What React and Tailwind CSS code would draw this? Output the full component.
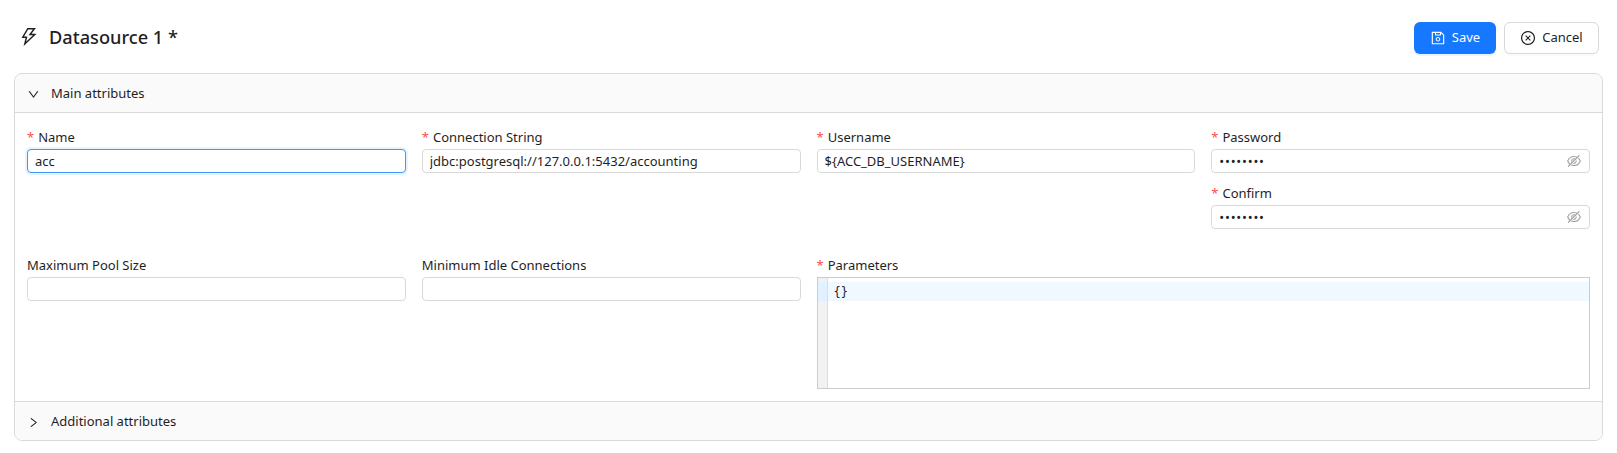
import React from "react";
import {
  AiOutlineCloseCircle,
  AiOutlineDown,
  AiOutlineEyeInvisible,
  AiOutlineRight,
  AiOutlineSave,
  AiOutlineThunderbolt,
} from "react-icons/ai";

const Label = ({ required, children }) => (
  <label className="flex h-[22px] items-center pb-[2px] text-[13px] leading-[20px] text-[#1f1f1f]">
    {required && <span className="mr-1 text-[#ff4d4f]">*</span>}
    {children}
  </label>
);

const Input = ({ value, focused }) => (
  <input
    readOnly
    value={value}
    className={
      "block h-6 w-full rounded-[4px] border bg-white px-[7px] text-[13px] text-[#1f1f1f] outline-none " +
      (focused
        ? "border-[#4096ff] shadow-[0_0_0_2px_rgba(5,145,255,0.1)]"
        : "border-[#d9d9d9]")
    }
  />
);

const Password = () => (
  <div className="flex h-6 w-full items-center rounded-[4px] border border-[#d9d9d9] bg-white px-[7px]">
    <input
      readOnly
      type="password"
      value="12345678"
      className="min-w-0 flex-1 bg-transparent pt-[2px] text-[13px] tracking-[0.8px] text-[#1f1f1f] outline-none"
    />
    <AiOutlineEyeInvisible className="text-[16px] text-[#a3a3a3]" />
  </div>
);

const Field = ({ label, required, value, focused }) => (
  <div>
    <Label required={required}>{label}</Label>
    <Input value={value} focused={focused} />
  </div>
);

const App = () => {
  return (
    <div className="h-[453px] bg-white px-[14px] font-['Noto_Sans','Open_Sans',sans-serif]">
      <div className="flex h-[73px] items-center justify-between pt-[2px]">
        <div className="flex items-center pl-[4px]">
          <AiOutlineThunderbolt className="text-[22px] text-[#1f1f1f]" />
          <h1 className="ml-[9px] text-[18.2px] font-medium text-[#1f1f1f]">Datasource 1 *</h1>
        </div>
        <div className="flex items-center gap-2 pr-[4px]">
          <button className="flex h-8 w-[82px] items-center justify-center gap-[6px] rounded-[6px] bg-[#1677ff] text-[13px] text-white shadow-[0_2px_0_rgba(5,145,255,0.1)]">
            <AiOutlineSave className="text-[16px]" />
            Save
          </button>
          <button className="flex h-8 w-[95px] items-center justify-center gap-[6px] rounded-[6px] border border-[#d9d9d9] bg-white text-[13px] text-[#1f1f1f] shadow-[0_2px_0_rgba(0,0,0,0.02)]">
            <AiOutlineCloseCircle className="text-[16px]" />
            Cancel
          </button>
        </div>
      </div>

      <div className="overflow-hidden rounded-[8px] border border-[#d9d9d9]">
        <div className="flex h-[39px] items-center border-b border-[#d9d9d9] bg-[#fafafa] pl-[12px] pt-[2px] text-[13px] text-[#1f1f1f]">
          <AiOutlineDown className="text-[13px]" />
          <span className="ml-[11px]">Main attributes</span>
        </div>

        <div className="px-3 pb-3 pt-[14px]">
          <div className="grid grid-cols-4 gap-x-4 gap-y-[26px]">
            <Field label="Name" required value="acc" focused />
            <Field label="Connection String" required value="jdbc:postgresql://127.0.0.1:5432/accounting" />
            <Field label="Username" required value="${ACC_DB_USERNAME}" />
            <div className="flex flex-col gap-[10px]">
              <div>
                <Label required>Password</Label>
                <Password />
              </div>
              <div>
                <Label required>Confirm</Label>
                <Password />
              </div>
            </div>

            <Field label="Maximum Pool Size" value="" />
            <Field label="Minimum Idle Connections" value="" />
            <div className="col-span-2">
              <Label required>Parameters</Label>
              <div className="flex h-28 border border-[#cccccc] bg-white">
                <div className="w-[10px] border-r border-[#dddddd] bg-[#f2f2f2] pt-1">
                  <div className="h-[19px] bg-[#e2f1ff]" />
                </div>
                <div className="flex-1 pt-1">
                  <div className="h-[19px] bg-[#f0f9ff] pl-[6px] pt-[1px] font-['DejaVu_Sans_Mono',monospace] text-[12px] leading-[19px] text-[#1f1f1f]">
                    {"{}"}
                  </div>
                </div>
              </div>
            </div>
          </div>
        </div>

        <div className="flex h-[39px] items-center border-t border-[#d9d9d9] bg-[#fafafa] pl-[12px] pt-[2px] text-[13px] text-[#1f1f1f]">
          <AiOutlineRight className="text-[13px]" />
          <span className="ml-[11px]">Additional attributes</span>
        </div>
      </div>
    </div>
  );
};

export default App;
